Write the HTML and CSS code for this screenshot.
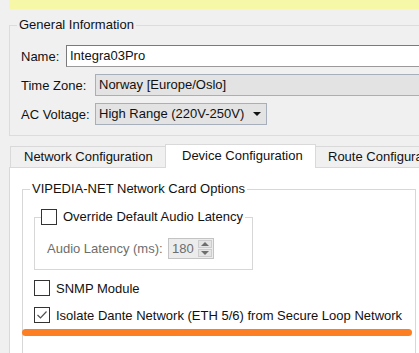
FILE: index.html
```html
<!DOCTYPE html>
<html>
	<head>
		<title>Device Settings</title>
		<link rel="stylesheet" href="styles.css">
	</head>
	<body>
	<div class="notice"></div>
	<fieldset class="group general">
		<legend>General Information</legend>
		<div class="row">
			<label class="lbl lbl-short">Name:</label>
			<div class="textbox">Integra03Pro</div>
		</div>
		<div class="row">
			<label class="lbl">Time Zone:</label>
			<div class="combo combo-wide">Norway [Europe/Oslo]</div>
		</div>
		<div class="row">
			<label class="lbl">AC Voltage:</label>
			<div class="combo combo-drop">High Range (220V-250V)<span class="arrow"></span></div>
		</div>
	</fieldset>

	<div class="tabs">
		<div class="tab tab-net">Network Configuration</div>
		<div class="tab tab-dev active">Device Configuration</div>
		<div class="tab tab-route">Route Configuration</div>
	</div>
	<div class="panel">
		<fieldset class="group card">
			<legend>VIPEDIA-NET Network Card Options</legend>
			<fieldset class="group latency">
				<legend><span class="check"></span>Override Default Audio Latency</legend>
				<div class="spin-row">
					<label class="lbl-latency">Audio Latency (ms):</label>
					<div class="spin">
						<span class="spin-val">180</span>
						<span class="spin-btns"><span class="up"></span><span class="down"></span></span>
					</div>
				</div>
			</fieldset>
			<div class="opt"><span class="check"></span>SNMP Module</div>
			<div class="opt opt-last"><span class="check"><svg width="14" height="14" viewBox="0 0 14 14"><polyline points="2.5,7 5.5,10 11.5,3.5" fill="none" stroke="#505050" stroke-width="1.2"/></svg></span>Isolate Dante Network (ETH 5/6) from Secure Loop Network</div>
			<div class="marker"></div>
		</fieldset>
	</div>
	</body>
</html>
```

FILE: styles.css
```css
html, body {
	margin: 0;
	padding: 0;
}
body {
	width: 419px;
	height: 353px;
	overflow: hidden;
	background-color: #f0f0f0;
	font-family: "Liberation Sans", Arial, sans-serif;
	font-size: 13px;
	color: #111;
}
.notice {
	margin-left: 9px;
	height: 9px;
	background-color: #f6f8a8;
}
fieldset.group {
	margin: 0;
	min-width: 0;
	border: 1px solid #dcdcdc;
}
fieldset.group legend {
	padding: 0 2px;
	margin-left: -4px;
	line-height: 16px;
}
.general {
	margin: 8px -20px 0 9px !important;
	padding: 12px 0 10px 11px;
}
.row {
	display: flex;
	align-items: center;
	height: 22px;
	margin-bottom: 7px;
}
.row:last-child {
	margin-bottom: 0;
}
.lbl {
	width: 74px;
	flex: none;
}
.lbl-short {
	width: 45px;
}
.textbox {
	flex: 1;
	box-sizing: border-box;
	height: 22px;
	line-height: 20px;
	padding-left: 3px;
	background-color: #fff;
	border: 1px solid #7a7a7a;
	border-bottom-color: #9a9a9a;
}
.combo {
	box-sizing: border-box;
	height: 22px;
	line-height: 20px;
	padding-left: 3px;
	background-color: #e3e3e3;
	border: 1px solid #a7b0ba;
	white-space: nowrap;
}
.combo-wide {
	flex: 1;
}
.combo-drop {
	width: 172px;
	display: flex;
	align-items: center;
}
.arrow {
	margin-left: auto;
	margin-right: 5px;
	width: 0;
	height: 0;
	border-left: 4px solid transparent;
	border-right: 4px solid transparent;
	border-top: 4px solid #111;
}
.tabs {
	display: flex;
	align-items: flex-end;
	margin: 8px 0 0 10px;
	height: 23px;
}
.tab {
	box-sizing: border-box;
	height: 21px;
	line-height: 20px;
	border: 1px solid #d9d9d9;
	border-bottom: none;
	white-space: nowrap;
	overflow: hidden;
	flex: none;
}
.tab-net {
	width: 156px;
	padding-left: 13px;
}
.tab-dev {
	width: 151px;
	margin-left: -1px;
	padding-left: 16px;
}
.tab-route {
	width: 120px;
	margin-left: -1px;
	padding-left: 12px;
}
.tab.active {
	height: 24px;
	line-height: 22px;
	margin-bottom: -1px;
	background-color: #fff;
	position: relative;
	z-index: 1;
}
.panel {
	margin: 0 -30px 0 9px;
	height: 200px;
	background-color: #fff;
	border: 1px solid #d9d9d9;
	padding-top: 13px;
}
.card {
	margin-left: 12px !important;
	width: 394px;
	box-sizing: border-box;
	padding: 12px 0 60px 11px;
	border-color: #d7d7d7 !important;
}
.latency {
	width: 219px;
	box-sizing: border-box;
	padding: 13px 0 10px 12px;
	border-color: #d7d7d7 !important;
}
.latency legend {
	display: flex;
	align-items: center;
	padding: 0 2px 0 0 !important;
	margin-left: -6px !important;
}
.latency legend .check {
	margin-right: 6px;
}
.check {
	box-sizing: border-box;
	width: 16px;
	height: 16px;
	border: 1px solid #333;
	background-color: #fff;
	flex: none;
	display: inline-flex;
	align-items: center;
	justify-content: center;
}
.spin-row {
	display: flex;
	align-items: center;
	height: 21px;
}
.lbl-latency {
	width: 121px;
	color: #6d6d6d;
	flex: none;
}
.spin {
	box-sizing: border-box;
	width: 46px;
	height: 21px;
	border: 1px solid #c3c3c3;
	background-color: #ececec;
	display: flex;
	align-items: stretch;
}
.spin-val {
	flex: 1;
	padding-left: 3px;
	line-height: 19px;
	color: #6d6d6d;
}
.spin-btns {
	width: 14px;
	display: flex;
	flex-direction: column;
	padding: 1px 1px 1px 0;
	gap: 1px;
}
.spin-btns span {
	flex: 1;
	background-color: #e4e4e4;
	border: 1px solid #cdcdcd;
	display: flex;
	align-items: center;
	justify-content: center;
}
.spin-btns .up::after {
	content: "";
	border-left: 4px solid transparent;
	border-right: 4px solid transparent;
	border-bottom: 4px solid #6e6e6e;
}
.spin-btns .down::after {
	content: "";
	border-left: 4px solid transparent;
	border-right: 4px solid transparent;
	border-top: 4px solid #6e6e6e;
}
.opt {
	display: flex;
	align-items: center;
	height: 16px;
	margin-top: 10px;
}
.opt .check {
	margin-right: 6px;
}
.opt-last {
	margin-top: 11px;
}
.marker {
	margin: 6px 0 0 -12px;
	width: 390px;
	height: 7px;
	border-radius: 4px;
	background-color: #fd7f24;
}
```
